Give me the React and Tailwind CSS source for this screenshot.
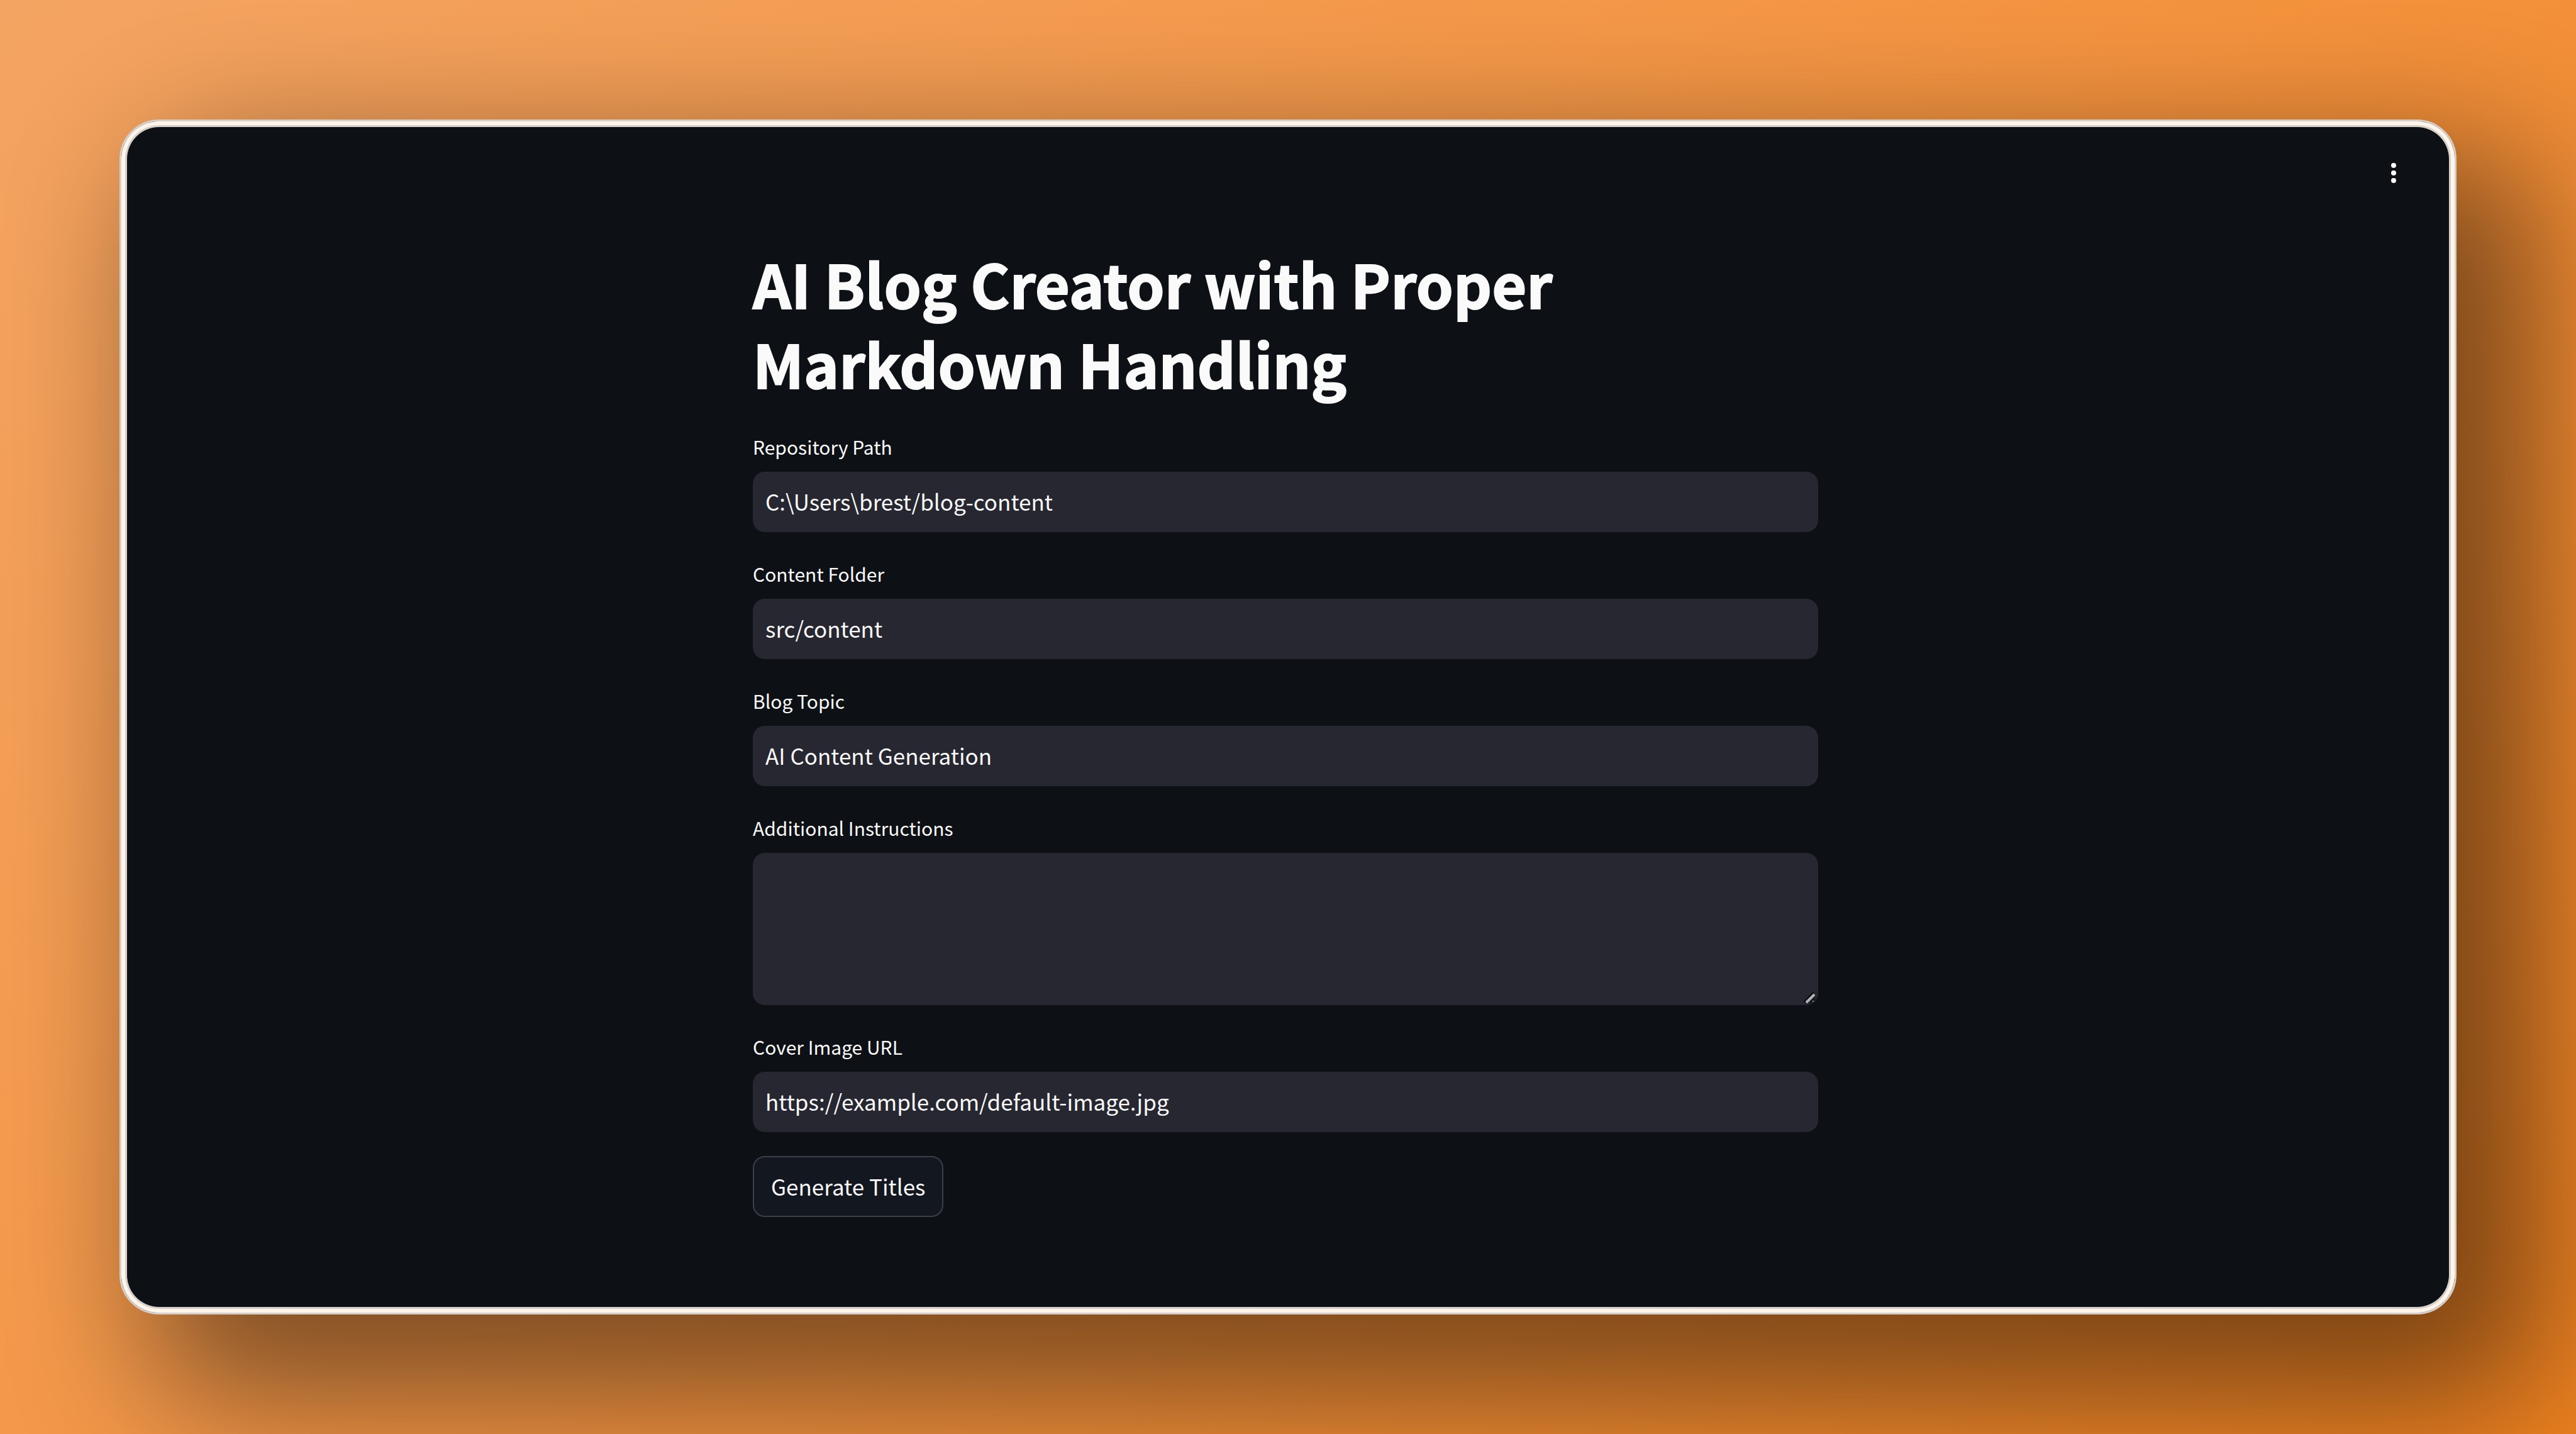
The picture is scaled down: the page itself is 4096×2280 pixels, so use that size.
const fields = [
  { id: "repository-path", label: "Repository Path", value: "C:\\Users\\brest/blog-content" },
  { id: "content-folder", label: "Content Folder", value: "src/content" },
  { id: "blog-topic", label: "Blog Topic", value: "AI Content Generation" },
  { id: "additional-instructions", label: "Additional Instructions", value: "", multiline: true },
  { id: "cover-image-url", label: "Cover Image URL", value: "https://example.com/default-image.jpg" },
];

function ResizeGrip() {
  return (
    <svg
      className="pointer-events-none absolute right-[4px] bottom-[2px] h-[18px] w-[20px]"
      viewBox="0 0 20 18"
      aria-hidden="true"
    >
      <path d="M2 15 L17 0" stroke="#08090d" strokeWidth="3" />
      <path d="M11 17 L19 9" stroke="#15171c" strokeWidth="3" />
      <path d="M5 16 L18 3" stroke="#b4b5b8" strokeWidth="4" />
      <circle cx="16" cy="14" r="1" fill="#b4b5b8" />
    </svg>
  );
}

function Field({ id, label, value, multiline }) {
  return (
    <div>
      <label htmlFor={id} className="mb-[12px] block text-[30px] leading-[56px]">
        {label}
      </label>
      {multiline ? (
        <div className="relative">
          <textarea
            id={id}
            defaultValue={value}
            className="block h-[242px] w-full resize-none rounded-[19px] bg-[#262730] px-[20px] py-[20px] text-[35px] leading-[56px] outline-none"
          />
          <ResizeGrip />
        </div>
      ) : (
        <input
          id={id}
          type="text"
          defaultValue={value}
          className="block h-[96px] w-full rounded-[19px] bg-[#262730] px-[20px] pb-[3px] text-[35px] outline-none"
        />
      )}
    </div>
  );
}

export default function App() {
  return (
    <div className="flex min-h-screen bg-[linear-gradient(135deg,#f4a462_0%,#f4933f_55%,#ec8020_100%)] p-[190px] font-['Noto_Sans_CJK_SC','Noto_Sans',sans-serif] text-[#fafafa]">
      <div className="flex grow flex-col rounded-[63px] border-[3px] border-[#d5d0ca] bg-[#0d1014] p-[9px] shadow-[inset_0_0_0_6px_#fff4ea,inset_0_0_0_9px_#d5d0ca,88px_96px_220px_40px_rgba(0,0,0,0.48)]">
        <header className="flex h-[184px] items-start justify-end pt-[49px] pr-[64px]">
          <button type="button" aria-label="Menu" className="size-[48px]">
            <svg viewBox="0 0 24 24" fill="currentColor" className="size-full" aria-hidden="true">
              <circle cx="12" cy="6" r="2" />
              <circle cx="12" cy="12" r="2" />
              <circle cx="12" cy="18" r="2" />
            </svg>
          </button>
        </header>
        <main className="pr-[8px]">
          <form className="mx-auto flex w-full max-w-[1694px] flex-col" onSubmit={(e) => e.preventDefault()}>
            <h1 className="mb-[42px] max-w-[1500px] text-[95px] leading-[127px] font-bold [-webkit-text-stroke:2px_#fafafa]">
              AI Blog Creator with Proper Markdown Handling
            </h1>
            <div className="flex flex-col gap-[38px]">
              {fields.map((field) => (
                <Field key={field.id} {...field} />
              ))}
              <button
                type="submit"
                className="flex h-[97px] items-center self-start rounded-[19px] border-2 border-[#3c3f47] bg-[#131720] px-[27px] text-[35px]"
              >
                Generate Titles
              </button>
            </div>
          </form>
        </main>
      </div>
    </div>
  );
}
